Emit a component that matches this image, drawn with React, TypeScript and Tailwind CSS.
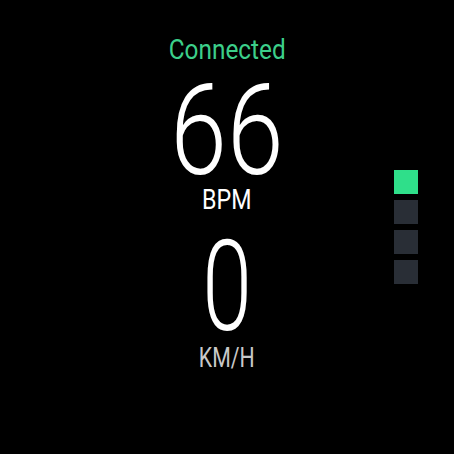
import React from "react";

export default function App() {
  return (
    <div
      className="relative w-[454px] h-[454px] bg-black overflow-hidden"
      style={{ fontFamily: "Roboto, 'Noto Sans', sans-serif" }}
    >
      <div className="flex flex-col items-center pt-[36px]">
        <div className="text-[28px] leading-[28px] text-[#3ccf8a] scale-x-[0.87]">Connected</div>
        <div className="mt-[17px] text-[126px] leading-[100px] font-light text-white scale-x-[0.81]">66</div>
        <div className="mt-[7px] text-[28px] leading-[24px] text-white scale-x-[0.83]">BPM</div>
        <div className="mt-[25px] text-[126px] leading-[100px] font-light text-white scale-x-[0.71]">0</div>
        <div className="mt-[9px] text-[28px] leading-[24px] text-[#c8c8c8] scale-x-[0.76]">KM/H</div>
      </div>
      <div className="absolute right-[36px] top-[170px] flex flex-col gap-[6px]">
        <div className="w-[24px] h-[24px] bg-[#2fdf8a]" />
        <div className="w-[24px] h-[24px] bg-[#292e36]" />
        <div className="w-[24px] h-[24px] bg-[#292e36]" />
        <div className="w-[24px] h-[24px] bg-[#292e36]" />
      </div>
    </div>
  );
}
